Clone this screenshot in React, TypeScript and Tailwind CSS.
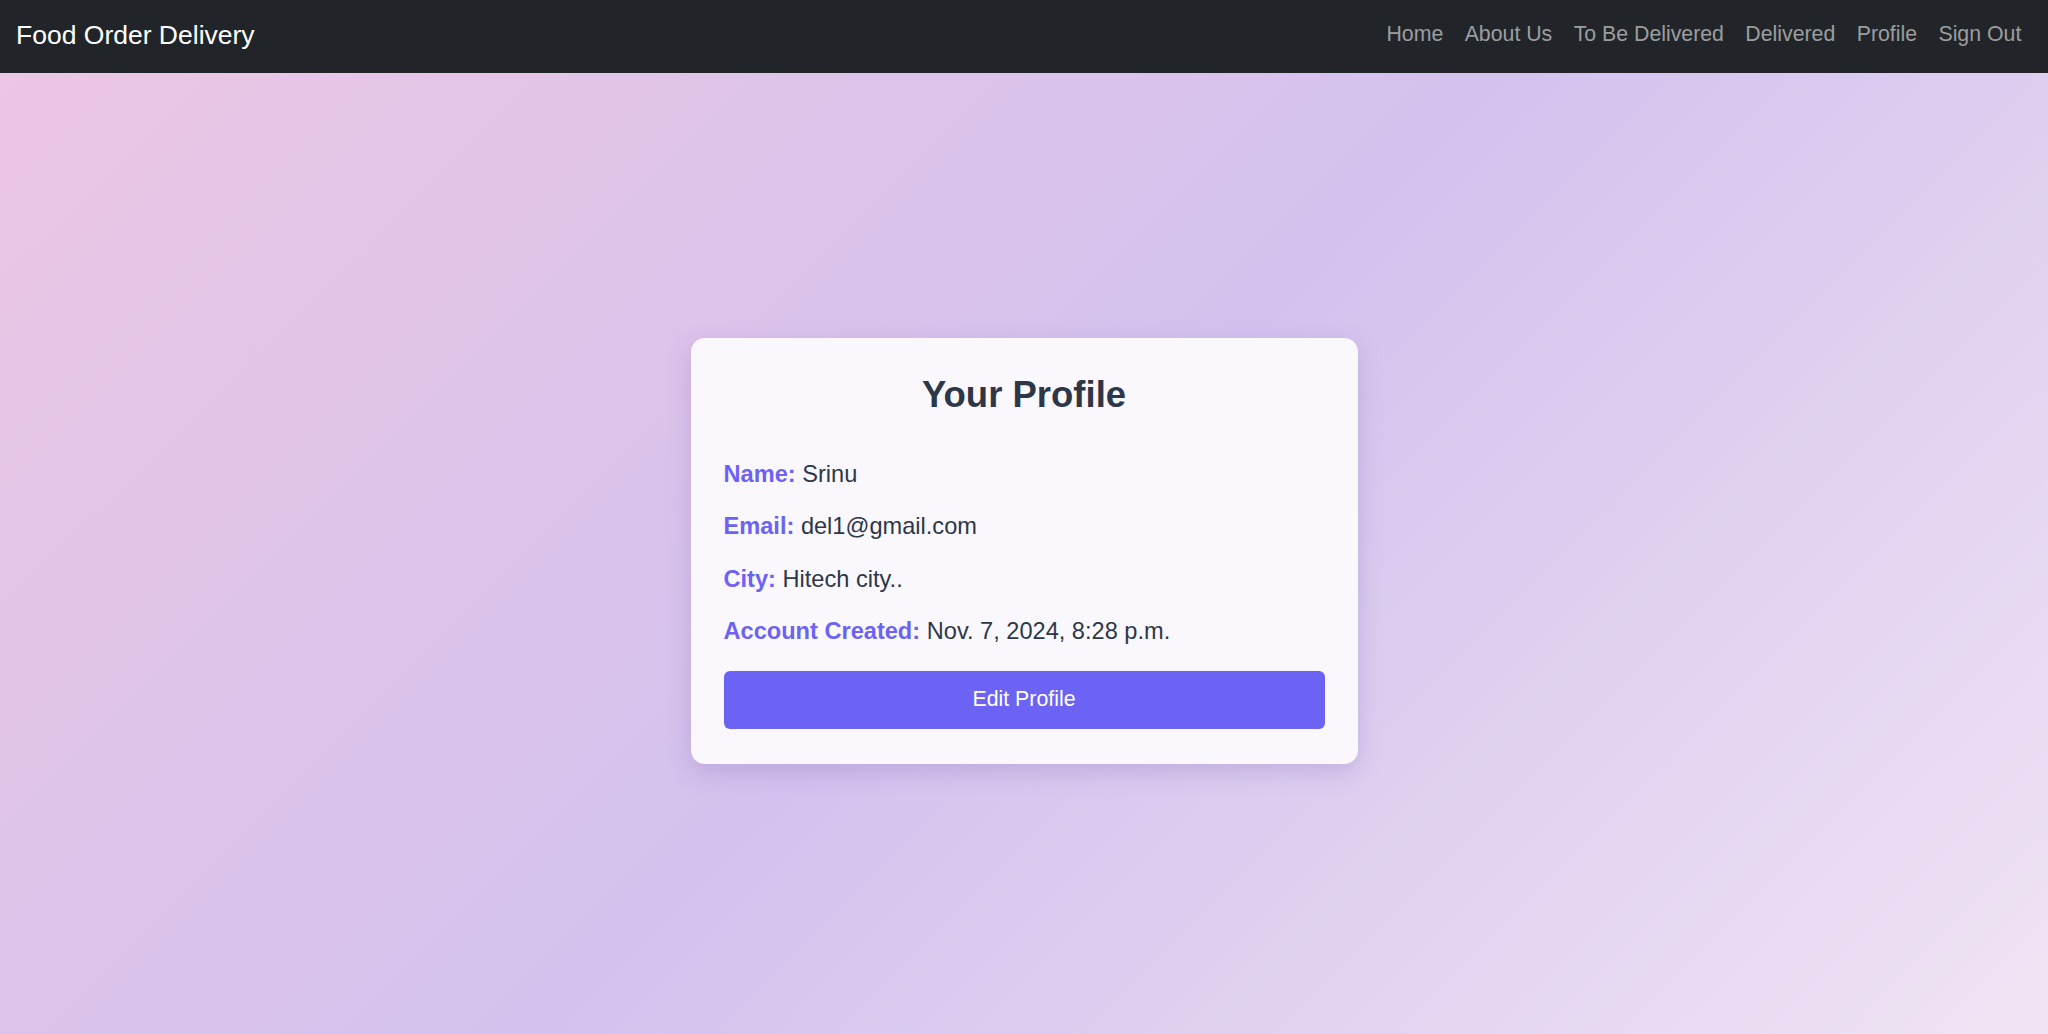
import React from "react";

const links = ["Home", "About Us", "To Be Delivered", "Delivered", "Profile", "Sign Out"];

const rows: { label: string; value: string }[] = [
  { label: "Name:", value: "Srinu" },
  { label: "Email:", value: "del1@gmail.com" },
  { label: "City:", value: "Hitech city.." },
  { label: "Account Created:", value: "Nov. 7, 2024, 8:28 p.m." },
];

const App: React.FC = () => {
  return (
    <div className="min-h-screen flex flex-col font-['Liberation_Sans',Arial,sans-serif]">
      <nav className="h-[73px] bg-[#212529] flex items-center justify-between pl-[16px] pr-[16px]">
        <span className="text-white text-[26.5px] leading-none pb-[2px]">Food Order Delivery</span>
        <ul className="flex items-center">
          {links.map((l) => (
            <li key={l}>
              <a className="block px-[10.7px] text-[21.3px] text-[#9b9d9f] leading-none pb-[3px]">{l}</a>
            </li>
          ))}
        </ul>
      </nav>

      <main className="flex-1 flex items-center justify-center bg-[linear-gradient(135deg,#ecc6e4_0%,#d3c2ee_50%,#f0e4f4_100%)] pb-[5px]">
        <div className="w-[667px] bg-[#faf8fd] rounded-[14px] shadow-[0_8px_24px_rgba(120,90,170,0.25)] px-[33px] pt-[35px] pb-[35px]">
          <h1 className="text-[36.5px] leading-[43px] font-bold text-[#2d3748] text-center">Your Profile</h1>
          <div className="mt-[41px] flex flex-col gap-[17.3px]">
            {rows.map((r) => (
              <p key={r.label} className="text-[23.6px] leading-[35px] text-[#2d3748]">
                <strong className="text-[#6c63f5] font-bold">{r.label}</strong> {r.value}
              </p>
            ))}
          </div>
          <button className="mt-[22px] w-full h-[58px] rounded-[6px] bg-[#6c63f5] text-white text-[21.3px]">
            Edit Profile
          </button>
        </div>
      </main>
    </div>
  );
};

export default App;
